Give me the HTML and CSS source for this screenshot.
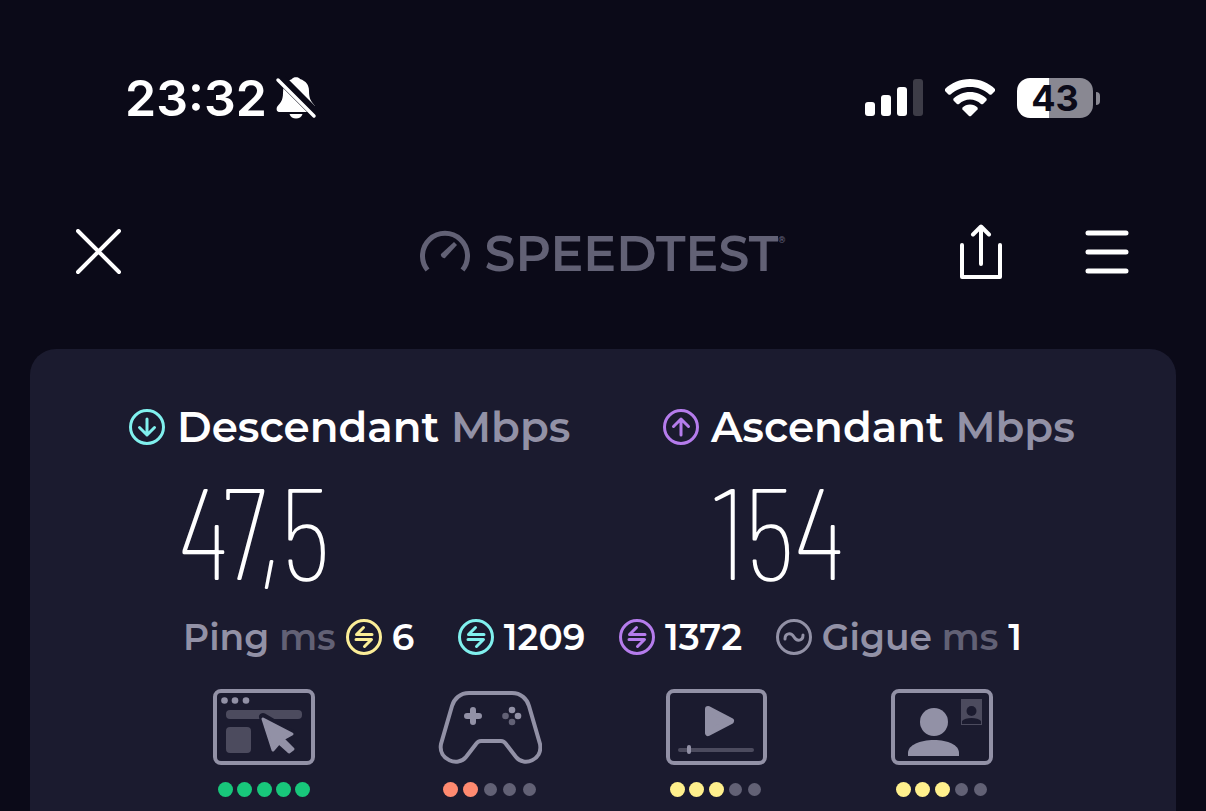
FILE: index.html
```
<!DOCTYPE html>
<html lang="fr">
<head>
    <meta charset="UTF-8">
    <meta name="viewport" content="width=device-width, initial-scale=1">
    <title>Speedtest</title>
    <link rel="stylesheet" href="styles.css">
</head>
<body>
    <div class="status-bar">
        <div class="status-left">
            <span class="time">23:32</span>
            <svg class="bell" width="42" height="44" viewBox="0 0 42 44" fill="#fff">
                <path d="M12 6C14 4 16 3.500 17 3C18 .5 24 .5 25 3C31 5 34 9 34 15C34 23 36 25 40 30V33C40 35 39 36 37 36H5C2 36 1 34 2 31C5 27 8 25 8 17C8 12 9 9 12 6Z"/>
                <path d="M14.500 38H27.500C26 44 16 44 14.500 38Z"/>
                <path d="M5 2L41 38" stroke="#0b0a18" stroke-width="10"/>
                <path d="M3 4L39 40" stroke="#fff" stroke-width="3.500" stroke-linecap="round"/>
            </svg>
        </div>
        <div class="status-right">
            <svg width="58" height="38" viewBox="0 0 58 38" fill="#fff">
                <rect x="0" y="23" width="10" height="14" rx="3"/>
                <rect x="16" y="16" width="10" height="21" rx="3"/>
                <rect x="32" y="8" width="10" height="29" rx="3"/>
                <rect x="48" y="0" width="10" height="37" rx="3" fill="#3d3c47"/>
            </svg>
            <svg width="50" height="38" viewBox="0 0 50 38" fill="#fff">
                <path d="M25 0C35 0 44 4 50 10Q50.500 11 50 12L46.500 15.500Q45.500 16 44.500 15.500C39 10.500 32.500 8 25 8S11 10.500 5.500 15.500Q4.500 16 3.500 15.500L0 12Q-.5 11 0 10C6 4 15 0 25 0Z"/>
                <path d="M25 13C31.500 13 37 15.500 41.500 19.500Q42 20.500 41.500 21.500L38 25Q37 25.500 36 25C33 22 29 20.500 25 20.500S17 22 14 25Q13 25.500 12 25L8.500 21.500Q8 20.500 8.500 19.500C13 15.500 18.500 13 25 13Z"/>
                <path d="M25 25.500C28 25.500 30.500 26.500 32.500 28.500Q33 29.500 32.500 30.500L26 37Q25 37.500 24 37L17.500 30.500Q17 29.500 17.500 28.500C19.500 26.500 22 25.500 25 25.500Z"/>
            </svg>
            <div class="battery">
                <span class="battery-level">43</span>
                <span class="battery-tip"></span>
            </div>
        </div>
    </div>

    <header class="top-nav">
        <button class="icon-button" aria-label="Fermer">
            <svg width="46" height="46" viewBox="0 0 46 46" fill="none" stroke="#fff" stroke-width="4" stroke-linecap="round">
                <path d="M2 2L43 43M43 2L2 43"/>
            </svg>
        </button>
        <div class="logo">
            <svg width="50" height="46" viewBox="0 0 50 46">
                <path d="M7.500 41A22.500 22.500 0 1 1 42.500 41" fill="none" stroke="#626175" stroke-width="5"/>
                <path d="M34 13L37 16L25 29C23 30 20 27 21 25Z" fill="#626175"/>
            </svg>
            <span class="logo-text">SPEEDTEST</span><span class="logo-mark">®</span>
        </div>
        <div class="nav-actions">
            <button class="icon-button" aria-label="Partager">
                <svg width="42" height="56" viewBox="0 0 42 56" fill="none" stroke="#fff" stroke-width="4" stroke-linecap="round" stroke-linejoin="round">
                    <path d="M2 21V53H40V21M21 40V3M13 10.500L21 2.500L29 10.500"/>
                </svg>
            </button>
            <button class="icon-button" aria-label="Menu">
                <svg width="44" height="46" viewBox="0 0 44 46" fill="none" stroke="#fff" stroke-width="5" stroke-linecap="round">
                    <path d="M3 4H41M3 23H41M3 42H41"/>
                </svg>
            </button>
        </div>
    </header>

    <main class="card">
        <section class="speeds">
            <div class="speed">
                <h2 class="speed-label">
                    <svg class="ring cyan" viewBox="0 0 36 36"><circle cx="18" cy="18" r="16.500"/><path d="M18 10V26M10.500 18.500L18 26L25.500 18.500"/></svg>
                    <span>Descendant <span class="unit">Mbps</span></span>
                </h2>
                <div class="speed-value">47,5</div>
            </div>
            <div class="speed">
                <h2 class="speed-label">
                    <svg class="ring purple" viewBox="0 0 36 36"><circle cx="18" cy="18" r="16.500"/><path d="M18 26V10M10.500 17.500L18 10L25.500 17.500"/></svg>
                    <span>Ascendant <span class="unit">Mbps</span></span>
                </h2>
                <div class="speed-value">154</div>
            </div>
        </section>

        <section class="latency">
            <div class="latency-item ping">
                <span class="name">Ping <span class="ms">ms</span></span>
                <svg class="ring yellow" viewBox="0 0 36 36"><circle cx="18" cy="18" r="16.500"/><path d="M26 15.500H10.500L17.500 8.500M10 20.500H25.500L18.500 27.500"/></svg>
                <span>6</span>
            </div>
            <div class="latency-item">
                <svg class="ring cyan" viewBox="0 0 36 36"><circle cx="18" cy="18" r="16.500"/><path d="M26 15.500H10.500L17.500 8.500M10 20.500H25.500L18.500 27.500"/></svg>
                <span>1209</span>
            </div>
            <div class="latency-item">
                <svg class="ring purple" viewBox="0 0 36 36"><circle cx="18" cy="18" r="16.500"/><path d="M26 15.500H10.500L17.500 8.500M10 20.500H25.500L18.500 27.500"/></svg>
                <span>1372</span>
            </div>
            <div class="latency-item">
                <svg class="ring gray" viewBox="0 0 36 36"><circle cx="18" cy="18" r="16.500"/><path d="M9 20C9 14 15 13 18 18S27 22 27 16"/></svg>
                <span class="name">Gigue <span class="ms">ms</span></span>
                <span>1</span>
            </div>
        </section>

        <section class="activities">
            <div class="activity">
                <svg width="104" height="76" viewBox="0 0 104 76" fill="#9291a6">
                    <rect x="3" y="2" width="98" height="72" rx="6" fill="none" stroke="#9291a6" stroke-width="4"/>
                    <circle cx="12.500" cy="11.500" r="3.300"/><circle cx="23" cy="11.500" r="3.300"/><circle cx="34" cy="11.500" r="3.300"/>
                    <rect x="14" y="21" width="76" height="9" rx="4" fill="#4c4b5e"/>
                    <rect x="14" y="38" width="25" height="26" rx="4" fill="#4c4b5e"/>
                    <path d="M51 28L80 45L71 50L81 60L77 64L67 55L62 62Z" stroke="#1b1b2f" stroke-width="8" stroke-linejoin="round"/>
                    <path d="M51 30L80 45L71 50L81 60L77 63L67 54L61 61Z" stroke="#9291a6" stroke-width="3" stroke-linejoin="round"/>
                </svg>
                <div class="dots good"><i class="on"></i><i class="on"></i><i class="on"></i><i class="on"></i><i class="on"></i></div>
            </div>
            <div class="activity">
                <svg width="104" height="76" viewBox="0 0 104 76" fill="#9291a6">
                    <path d="M31 4H74C83 4 89 10 91 17L102 55C105 71 86 78 78 68L68 55Q66 52 63 52H43Q40 52 38 55L28 68C20 78 0 71 3 55L14 17C16 10 22 4 31 4Z" fill="none" stroke="#9291a6" stroke-width="4"/>
                    <path d="M35 21V33M29 27H41" stroke="#9291a6" stroke-width="6" stroke-linecap="round"/>
                    <circle cx="74" cy="21" r="3.300"/><circle cx="80" cy="27" r="3.300"/>
                    <circle cx="67.500" cy="27" r="3.300" fill="#626175"/><circle cx="74" cy="33" r="3.300" fill="#626175"/>
                </svg>
                <div class="dots poor"><i class="on"></i><i class="on"></i><i></i><i></i><i></i></div>
            </div>
            <div class="activity">
                <svg width="104" height="76" viewBox="0 0 104 76" fill="#9291a6">
                    <rect x="4" y="2" width="97" height="72" rx="6" fill="none" stroke="#9291a6" stroke-width="4"/>
                    <path d="M44 20L67 32L44 44Z" stroke="#9291a6" stroke-width="6" stroke-linejoin="round"/>
                    <path d="M16 61H88" stroke="#4c4b5e" stroke-width="4" stroke-linecap="round"/>
                    <rect x="23" y="56" width="4" height="9" rx="2"/>
                </svg>
                <div class="dots fair"><i class="on"></i><i class="on"></i><i class="on"></i><i></i><i></i></div>
            </div>
            <div class="activity">
                <svg width="104" height="76" viewBox="0 0 104 76" fill="#9291a6">
                    <rect x="3" y="2" width="98" height="72" rx="6" fill="none" stroke="#9291a6" stroke-width="4"/>
                    <circle cx="44" cy="33" r="14"/>
                    <path d="M18 67V64C18 56 30 51 44 51S69 56 69 64V67Z"/>
                    <rect x="71" y="10" width="21" height="26" fill="#4c4b5e"/>
                    <circle cx="81.500" cy="22" r="5" fill="#1b1b2f"/>
                    <path d="M72 35V32C75 28 88 28 91 32V35Z" fill="#1b1b2f"/>
                </svg>
                <div class="dots fair"><i class="on"></i><i class="on"></i><i class="on"></i><i></i><i></i></div>
            </div>
        </section>
    </main>
</body>
</html>
```
FILE: styles.css
```
* {
    box-sizing: border-box;
}

body {
    display: flex;
    flex-direction: column;
    min-height: 100vh;
    margin: 0;
    font-family: Montserrat, Inter, sans-serif;
    font-weight: 600;
    background-color: #0b0a18;
    color: white;
}

svg {
    display: block;
    flex: none;
}

/* phone status bar */
.status-bar {
    display: flex;
    justify-content: space-between;
    align-items: center;
    height: 196px;
    padding: 0 106px 0 125px;
    font-family: Inter, sans-serif;
}

.status-left {
    display: flex;
    align-items: center;
    gap: 8px;
}

.time {
    font-size: 50px;
    line-height: 60px;
}

.status-right {
    display: flex;
    align-items: center;
    gap: 22px;
}

.battery {
    display: flex;
    align-items: center;
    gap: 3px;
}

.battery-level {
    width: 76px;
    border-radius: 13px;
    background: linear-gradient(to right, white 42%, #898892 42%);
    color: #0b0a18;
    font-size: 36px;
    font-weight: 700;
    line-height: 40px;
    text-align: center;
}

.battery-tip {
    width: 4px;
    height: 13px;
    border-radius: 0 6px 6px 0;
    background: #898892;
}

/* header */
.top-nav {
    display: grid;
    grid-template-columns: 1fr auto 1fr;
    align-items: center;
    height: 112px;
    padding: 0 77px 0 76px;
}

.icon-button {
    padding: 0;
    border: none;
    background: none;
    cursor: pointer;
    justify-self: start;
}

.logo {
    display: flex;
    align-items: center;
    color: #626175;
}

.logo-text {
    margin-left: 15px;
    padding-top: 4px;
    font-size: 49px;
    line-height: 60px;
}

.logo-mark {
    align-self: flex-start;
    margin-top: 14px;
    font-size: 9px;
}

.nav-actions {
    display: flex;
    justify-content: flex-end;
    align-items: center;
    gap: 83px;
}

/* results */
.card {
    flex: 1;
    margin: 41px 30px 0;
    padding-top: 50px;
    border-radius: 26px 26px 0 0;
    background: #1b1b2f;
}

.speeds {
    display: grid;
    grid-template-columns: 1fr 1fr;
    gap: 84px;
    padding: 0 63px 0 99px;
}

.speed-label {
    display: flex;
    align-items: center;
    gap: 12px;
    margin: 0;
    font-size: 42px;
    font-weight: 600;
    line-height: 56px;
    white-space: nowrap;
}

.unit,
.name {
    color: #9291a6;
}

.ms {
    color: #626175;
}

.speed-value {
    margin-top: 13px;
    padding-left: 50px;
    font-family: "Barlow Condensed", "Roboto Condensed", sans-serif;
    font-size: 130px;
    font-weight: 200;
    line-height: 120px;
}

.ring {
    width: 36px;
    height: 36px;
    fill: none;
    stroke: currentColor;
    stroke-width: 3;
    stroke-linecap: round;
    stroke-linejoin: round;
}

.cyan {
    color: #80f0ee;
}

.purple {
    color: #b57cec;
}

.yellow {
    color: #fbed97;
}

.gray {
    color: #9291a6;
}

.latency {
    display: flex;
    justify-content: space-between;
    margin-top: 25px;
    padding: 0 154px 0 153px;
    font-size: 36px;
    line-height: 48px;
    white-space: nowrap;
}

.latency-item {
    display: flex;
    align-items: center;
    gap: 10px;
}

.ping {
    padding-right: 10px;
}

.activities {
    display: grid;
    grid-template-columns: repeat(4, 1fr);
    justify-items: center;
    margin-top: 28px;
    padding: 0 121px 13px;
}

.dots {
    display: flex;
    align-items: center;
    justify-content: space-between;
    width: 92px;
    height: 15px;
    margin: 17px auto 0;
}

.dots i {
    width: 15px;
    height: 15px;
    border: 1px solid transparent;
    border-radius: 50%;
    background: #626175 padding-box;
}

.dots.poor {
    width: 94px;
}

.good .on {
    background: #18c77b border-box;
}

.poor .on {
    background: #ff8a70 border-box;
}

.fair .on {
    background: #fff08d border-box;
}
```
